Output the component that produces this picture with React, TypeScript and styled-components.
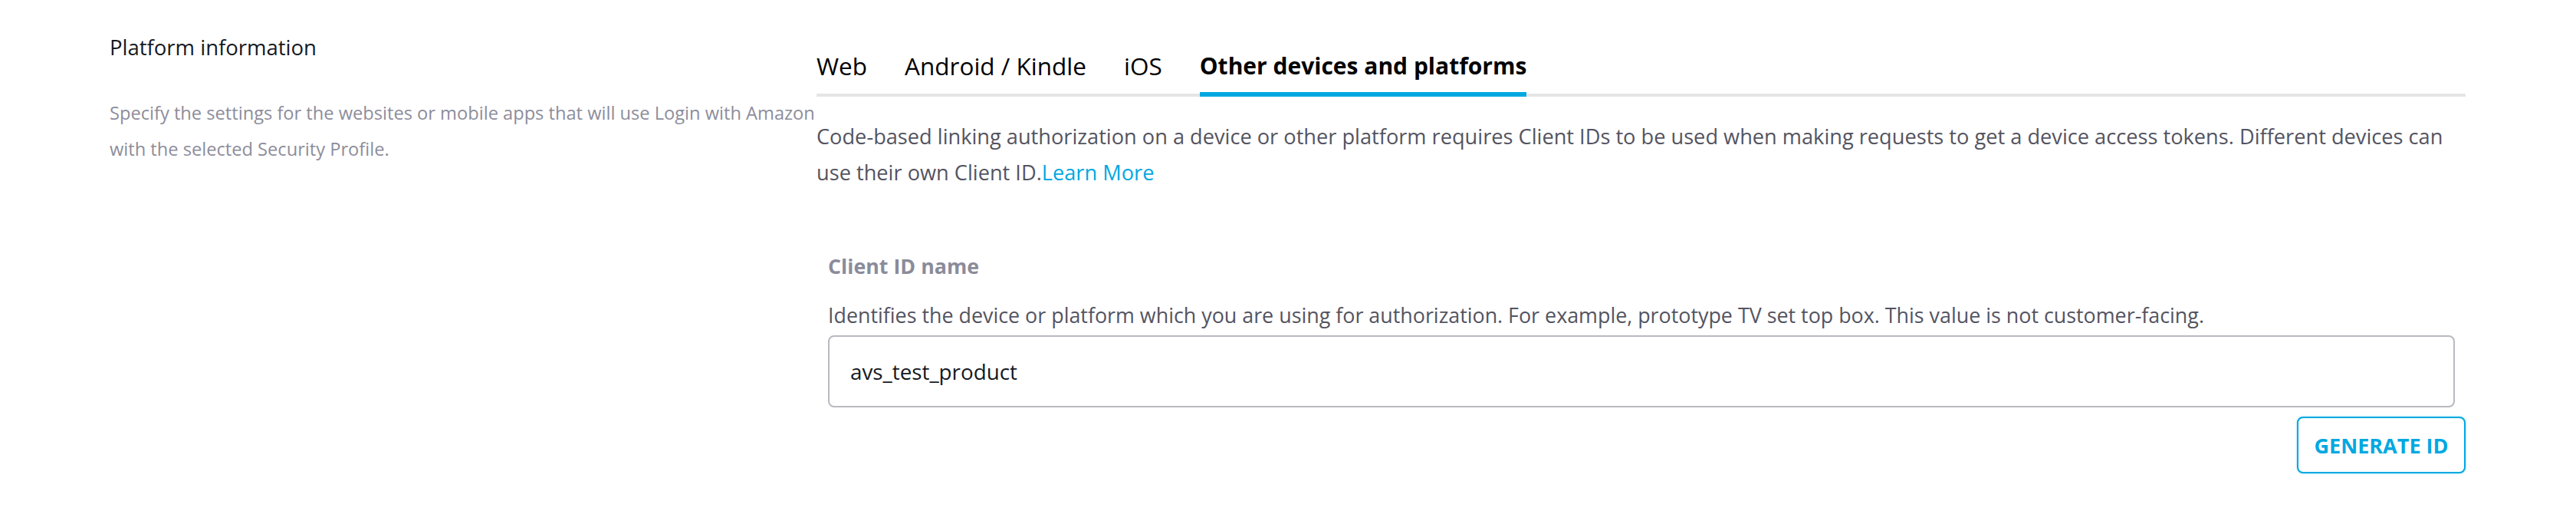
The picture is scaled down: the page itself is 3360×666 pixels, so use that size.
import React from "react";
import styled, { createGlobalStyle } from "styled-components";

const Global = createGlobalStyle`
  html, body { margin: 0; padding: 0; background: #ffffff; }
  body { font-family: "Open Sans", "Noto Sans", Arial, sans-serif; color: #16191f; }
  * { box-sizing: border-box; }
`;

const Page = styled.div`
  display: grid;
  grid-template-columns: 922px 1fr;
  padding: 40px 144px 40px 143px;
  width: 3360px;
`;

const Side = styled.div`
  display: flex;
  flex-direction: column;
  padding-top: 2px;
`;

const SideTitle = styled.h2`
  margin: 0;
  font-size: 27.5px;
  line-height: 40px;
  font-weight: 400;
  color: #16191f;
`;

const SideText = styled.p`
  margin: 42px 0 0;
  font-size: 23.65px;
  line-height: 47px;
  color: #8d8d9b;
  white-space: nowrap;
`;

const Main = styled.div`
  display: flex;
  flex-direction: column;
  padding-top: 26px;
`;

const TabList = styled.div`
  display: flex;
  align-items: flex-end;
  gap: 49px;
  box-shadow: inset 0 -4px 0 #e5e5e5;
`;

const Tab = styled.button<{ $active?: boolean }>`
  border: 0;
  background: none;
  padding: 0 0 14px;
  margin: 0;
  font-family: inherit;
  font-size: ${(p) => (p.$active ? "30px" : "31.5px")};
  line-height: 40px;
  font-weight: ${(p) => (p.$active ? 700 : 400)};
  color: #000000;
  border-bottom: 6px solid ${(p) => (p.$active ? "#00a8e1" : "transparent")};
  cursor: pointer;
`;

const Intro = styled.p`
  margin: 28px 0 0;
  font-size: 27.2px;
  line-height: 47px;
  color: #545461;
`;

const Link = styled.a`
  color: #00a8e1;
  text-decoration: none;
`;

const Field = styled.div`
  display: flex;
  flex-direction: column;
  margin-top: 81px;
  padding: 0 14px 0 15px;
`;

const Label = styled.label`
  font-size: 26.8px;
  line-height: 36px;
  font-weight: 700;
  color: #8b8b9a;
`;

const Hint = styled.div`
  margin-top: 28px;
  font-size: 26.85px;
  line-height: 36px;
  color: #545461;
`;

const Input = styled.input`
  margin-top: 8px;
  height: 94px;
  width: 100%;
  border: 2px solid #b9b9c0;
  border-radius: 8px;
  padding: 0 27px;
  font-family: inherit;
  font-size: 27.8px;
  color: #16191f;
  outline: none;
`;

const Actions = styled.div`
  display: flex;
  justify-content: flex-end;
  margin-top: 12px;
`;

const Button = styled.button`
  width: 220px;
  height: 74px;
  border: 2px solid #00a8e1;
  border-radius: 8px;
  background: #ffffff;
  box-shadow: 0 0 3px rgba(0, 168, 225, 0.45);
  font-family: inherit;
  font-size: 27px;
  font-weight: 700;
  color: #00a8e1;
  cursor: pointer;
`;

export default function App() {
  const tabs = ["Web", "Android / Kindle", "iOS", "Other devices and platforms"];
  return (
    <>
      <Global />
      <Page>
        <Side>
          <SideTitle>Platform information</SideTitle>
          <SideText>
            Specify the settings for the websites or mobile apps that will use Login with Amazon
            <br />
            with the selected Security Profile.
          </SideText>
        </Side>
        <Main>
          <TabList>
            {tabs.map((t, i) => (
              <Tab key={t} $active={i === 3}>
                {t}
              </Tab>
            ))}
          </TabList>
          <Intro>
            Code-based linking authorization on a device or other platform requires Client IDs to be used when making
            requests to get a device access tokens. Different devices can
            <br />
            use their own Client ID.<Link href="#">Learn More</Link>
          </Intro>
          <Field>
            <Label>Client ID name</Label>
            <Hint>
              Identifies the device or platform which you are using for authorization. For example, prototype TV set top
              box. This value is not customer-facing.
            </Hint>
            <Input defaultValue="avs_test_product" />
          </Field>
          <Actions>
            <Button>GENERATE ID</Button>
          </Actions>
        </Main>
      </Page>
    </>
  );
}
